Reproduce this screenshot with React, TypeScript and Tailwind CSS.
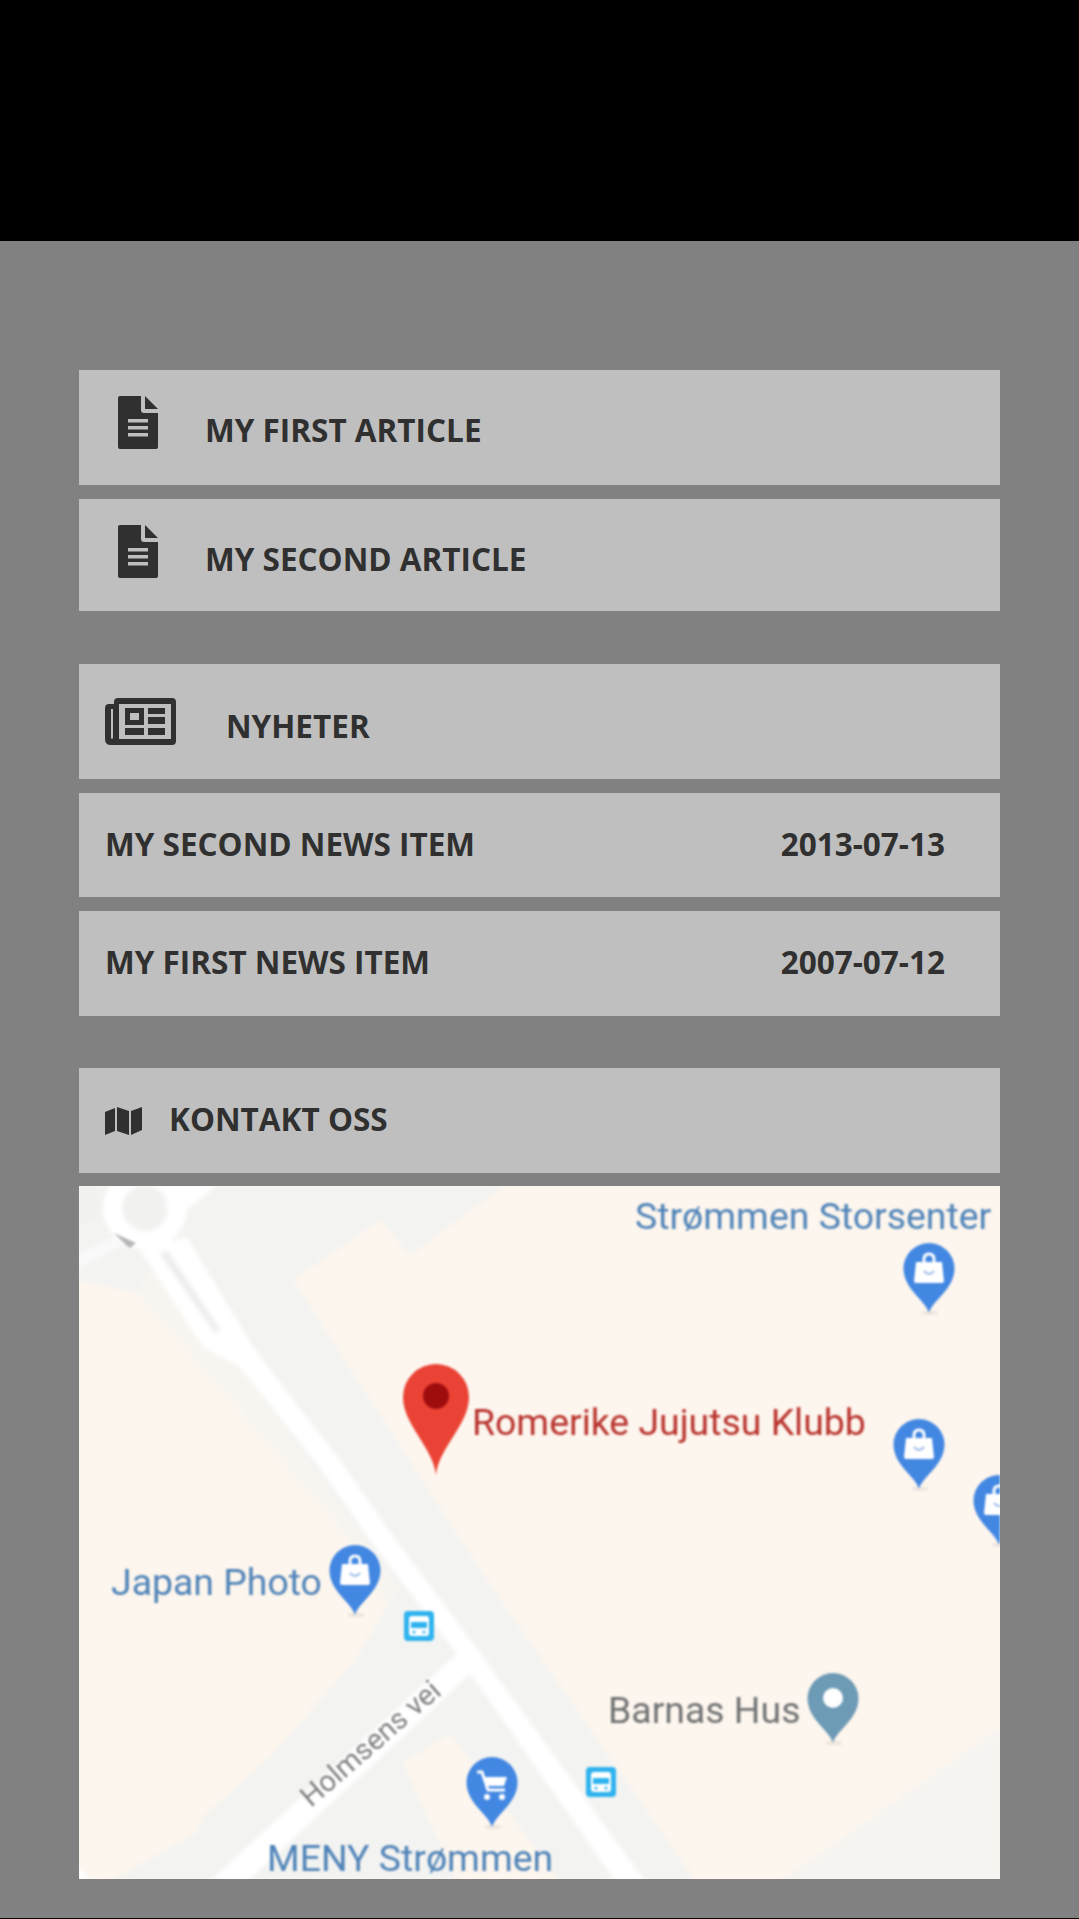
const cardText = "font-['Open_Sans',sans-serif] text-[31.5px] font-bold leading-[42px] text-[#303030] uppercase";

function FileIcon() {
  return (
    <svg viewBox="0 0 40 53" className="h-[53px] w-[40px] shrink-0 fill-[#303030]">
      <path d="M2 0H23V14Q23 17 26 17H40V51Q40 53 38 53H2Q0 53 0 51V2Q0 0 2 0Z" />
      <path d="M27 0L40 13H27Z" />
      <path d="M10 23H30V26.5H10ZM10 30H30V33.5H10ZM10 37H30V40.5H10Z" fill="#bfbfbf" />
    </svg>
  );
}

function NewsIcon() {
  return (
    <svg viewBox="0 0 71 47" className="h-[47px] w-[71px] shrink-0 fill-[#303030]">
      <path
        fillRule="evenodd"
        d="M13 0H67Q71 0 71 4V43Q71 47 67 47H6Q0 47 0 41V10Q0 6 4 6H9V4Q9 0 13 0ZM14 6V41H66V6ZM6 11V39Q6 41 7 41Q8 41 8 39V11Z"
      />
      <path
        fillRule="evenodd"
        d="M20 10H39V27H20ZM25 15V22H34V15ZM43 10H60V16H43ZM43 19H60V26H43ZM20 30H39V37H20ZM43 30H60V37H43Z"
      />
    </svg>
  );
}

function MapIcon() {
  return (
    <svg viewBox="0 0 37 28" className="h-[28px] w-[37px] shrink-0 fill-[#303030]">
      <path d="M0 5L10 1V24L0 28ZM12 0L24 4V28L12 24ZM26 4L37 0V23L26 28Z" />
    </svg>
  );
}

function Card({ className, children }: { className: string; children: React.ReactNode }) {
  return <div className={`flex bg-[#bfbfbf] ${className}`}>{children}</div>;
}

function BluePin({ x, y, fill = "#4287e2", kind }: { x: number; y: number; fill?: string; kind: "bag" | "cart" | "dot" }) {
  return (
    <g transform={`translate(${x} ${y})`}>
      <ellipse cx="1" cy="70" rx="9" ry="2.5" fill="#000" opacity="0.06" />
      <path d="M0 70C-3 58-25.5 46-25.5 25.5A25.5 25.5 0 1 1 25.5 25.5C25.5 46 3 58 0 70Z" fill={fill} />
      {kind === "bag" && (
        <>
          <path d="M-13 19H13L15 38Q15 40 13 40H-13Q-15 40-15 38Z" fill="#fff" />
          <path d="M-5 19V16Q-5 11 0 11Q5 11 5 16V19" fill="none" stroke="#fff" strokeWidth="3" />
          <path d="M-5 28Q0 34 5 28" fill="none" stroke="#9dbce8" strokeWidth="2" />
        </>
      )}
      {kind === "cart" && (
        <>
          <path d="M-15 15H-10L-4 33H13" fill="none" stroke="#fff" strokeWidth="3" />
          <path d="M-7 20H15L12 29H-4Z" fill="#fff" />
          <circle cx="-5" cy="40" r="3" fill="#fff" />
          <circle cx="10" cy="40" r="3" fill="#fff" />
        </>
      )}
      {kind === "dot" && <circle cx="0" cy="25" r="10" fill="#fff" />}
    </g>
  );
}

function BusStop({ x, y }: { x: number; y: number }) {
  return (
    <g transform={`translate(${x} ${y})`}>
      <rect width="30" height="30" rx="4" fill="#2fb3ef" />
      <rect x="5" y="5" width="20" height="20" rx="3" fill="#fff" />
      <rect x="7" y="11" width="16" height="6" fill="#2fb3ef" />
      <circle cx="10" cy="21" r="1.5" fill="#2fb3ef" />
      <circle cx="20" cy="21" r="1.5" fill="#2fb3ef" />
    </g>
  );
}

// coordinates below are the page's, the viewBox starts at the map's corner
function MapPicture() {
  const label = "font-['Roboto',sans-serif]";
  return (
    <div className="h-[693px] overflow-hidden bg-[#fdf6ee]">
      <svg viewBox="79 1186 921 693" className="block h-[693px] w-[921px] blur-[0.8px]">
        <defs>
          <filter id="soft">
            <feGaussianBlur stdDeviation="2" />
          </filter>
        </defs>
        <g filter="url(#soft)">
          {/* grey ground left of and around the main road */}
          <path d="M60 1170H525L410 1255L380 1220L293 1280L487 1580L705 1895H85L197 1833L203 1817L270 1757L353 1663L387 1607L343 1533L137 1293L60 1277Z" fill="#f3f3f1" />
          <path d="M137 1293L343 1533L387 1607L400 1590L240 1367L203 1347L150 1265Z" fill="#f8f5f0" />
          <path d="M760 1895L1020 1714V1895Z" fill="#f6f4f1" />
          <path d="M450 1733L403 1763L463 1895H570L492 1790Z" fill="#fdf6ee" />
          {/* roads */}
          <path d="M140 1250L203 1347L240 1367L316 1463L370 1540L456 1653L625 1895H655L480 1653L396 1540L342 1463L255 1350L187 1237Z" fill="#fff" />
          <path d="M167 1250L220 1330L215 1333L160 1254Z" fill="#ececec" />
          <path d="M453 1657L475 1650L480 1672L467 1677L233 1895H195Z" fill="#fff" />
          <circle cx="145" cy="1208" r="42" fill="#fff" />
          <circle cx="145" cy="1208" r="23" fill="#f1f1f0" />
          <path d="M195 1170L235 1170L175 1220L165 1205Z" fill="#fff" />
          <path d="M60 1262L118 1235L124 1245L60 1278Z" fill="#f9f9f9" />
          <circle cx="77" cy="1203" r="21" fill="#f1f1f0" />
          <path d="M70 1860L105 1895H70Z" fill="#fff" />
        </g>
        <path d="M114 1233L136 1243L130 1248L127 1246Z" fill="#b8b8b8" />

        {/* pins */}
        <path d="M436 1475C433 1447 403 1425 403 1397A33 33 0 1 1 469 1397C469 1425 439 1447 436 1475Z" fill="#ea4335" />
        <circle cx="436" cy="1396" r="13" fill="#a00d0d" />
        <BluePin x={929} y={1243} kind="bag" />
        <BluePin x={919} y={1419} kind="bag" />
        <BluePin x={999} y={1475} kind="bag" />
        <BluePin x={355} y={1545} kind="bag" />
        <BluePin x={492} y={1757} kind="cart" />
        <BluePin x={833} y={1673} fill="#6d9ab5" kind="dot" />
        <BusStop x={404} y={1611} />
        <BusStop x={586} y={1767} />

        {/* labels */}
        <text x="635" y="1229" className={`${label} fill-[#4f83b8] text-[37.4px]`}>Strømmen Storsenter</text>
        <text x="472" y="1435" className={`${label} fill-[#b8322c] text-[37.4px]`}>Romerike Jujutsu Klubb</text>
        <text x="111" y="1595" className={`${label} fill-[#4f83b8] text-[37.4px]`}>Japan Photo</text>
        <text x="608" y="1723" className={`${label} fill-[#707274] text-[37.4px]`}>Barnas Hus</text>
        <text x="267" y="1871" className={`${label} fill-[#4f83b8] text-[37.4px]`}>MENY Strømmen</text>
        <text x="311" y="1808" transform="rotate(-41 311 1808)" className={`${label} fill-[#808080] text-[29px]`}>Holmsens vei</text>
      </svg>
    </div>
  );
}

export default function App() {
  return (
    <div className="flex min-h-[1919px] flex-col bg-[#818181]">
      <div className="h-[241px] bg-black" />
      <main className="flex flex-1 flex-col px-[79px] pt-[129px]">
        <Card className="h-[115px] pl-[39px] pt-[26px]">
          <FileIcon />
          <h2 className={`ml-[47px] mt-[13px] ${cardText}`}>My first article</h2>
        </Card>
        <Card className="mt-[14px] h-[112px] pl-[39px] pt-[26px]">
          <FileIcon />
          <h2 className={`ml-[47px] mt-[13px] ${cardText}`}>My second article</h2>
        </Card>

        <Card className="mt-[53px] h-[115px] pl-[26px] pt-[34px]">
          <NewsIcon />
          <h2 className={`ml-[50px] mt-[7px] ${cardText}`}>Nyheter</h2>
        </Card>
        <Card className="mt-[14px] h-[104px] items-center justify-between pb-[2px] pl-[26px] pr-[55px]">
          <span className={cardText}>My second news item</span>
          <span className={cardText}>2013-07-13</span>
        </Card>
        <Card className="mt-[14px] h-[105px] items-center justify-between pb-[3px] pl-[26px] pr-[55px]">
          <span className={cardText}>My first news item</span>
          <span className={cardText}>2007-07-12</span>
        </Card>

        <Card className="mt-[52px] h-[105px] items-center pl-[26px]">
          <MapIcon />
          <h2 className={`mb-[4px] ml-[27px] ${cardText}`}>Kontakt oss</h2>
        </Card>
        <div className="mt-[13px]">
          <MapPicture />
        </div>
      </main>
      <div className="h-px bg-black" />
    </div>
  );
}
